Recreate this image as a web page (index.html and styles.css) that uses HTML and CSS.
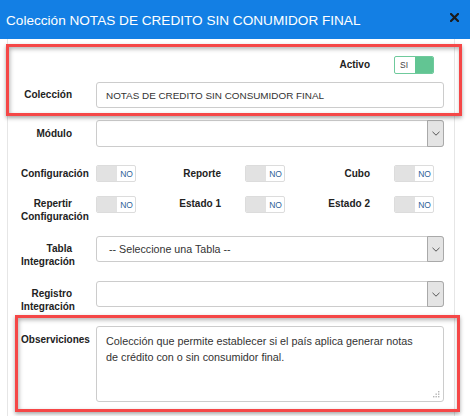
FILE: index.html
```html
<!DOCTYPE html>
<html>
<head>
<meta charset="utf-8">
<link rel="stylesheet" href="styles.css">
</head>
<body>
<div class="header">
  <span class="title">Colección NOTAS DE CREDITO SIN CONUMIDOR FINAL</span>
  <svg class="close" width="9" height="9" viewBox="0 0 9 9"><path d="M1 1L8 8M8 1L1 8" stroke="#1b1b1b" stroke-width="2.2" stroke-linecap="square"/></svg>
</div>
<div class="panel">
  <div class="trow r-activo">
    <div class="grp"></div>
    <div class="grp"></div>
    <div class="grp"><span class="lbl">Activo</span><span class="tg on"><span class="tg-txt">SI</span><span class="tg-knob"></span></span></div>
  </div>
  <div class="frow r-col">
    <span class="lbl">Colección</span>
    <div class="field input">NOTAS DE CREDITO SIN CONSUMIDOR FINAL</div>
  </div>
  <div class="frow r-mod">
    <span class="lbl lbl-mod">Módulo</span>
    <div class="field select"><span class="sel-txt"></span><span class="arrow"><svg width="8" height="5" viewBox="0 0 8 5"><path d="M0.5 0.8L4 4.2L7.5 0.8" fill="none" stroke="#555" stroke-width="1"/></svg></span></div>
  </div>
  <div class="trow r-t1">
    <div class="grp"><span class="lbl">Configuración</span><span class="tg off"><span class="tg-knob"></span><span class="tg-txt">NO</span></span></div>
    <div class="grp"><span class="lbl">Reporte</span><span class="tg off"><span class="tg-knob"></span><span class="tg-txt">NO</span></span></div>
    <div class="grp"><span class="lbl">Cubo</span><span class="tg off"><span class="tg-knob"></span><span class="tg-txt">NO</span></span></div>
  </div>
  <div class="trow r-t2">
    <div class="grp"><span class="lbl">Repertir Configuración</span><span class="tg off"><span class="tg-knob"></span><span class="tg-txt">NO</span></span></div>
    <div class="grp"><span class="lbl">Estado 1</span><span class="tg off"><span class="tg-knob"></span><span class="tg-txt">NO</span></span></div>
    <div class="grp"><span class="lbl">Estado 2</span><span class="tg off"><span class="tg-knob"></span><span class="tg-txt">NO</span></span></div>
  </div>
  <div class="frow r-tab">
    <span class="lbl">Tabla Integración</span>
    <div class="field select"><span class="sel-txt">-- Seleccione una Tabla --</span><span class="arrow"><svg width="8" height="5" viewBox="0 0 8 5"><path d="M0.5 0.8L4 4.2L7.5 0.8" fill="none" stroke="#555" stroke-width="1"/></svg></span></div>
  </div>
  <div class="frow r-reg">
    <span class="lbl">Registro Integración</span>
    <div class="field select"><span class="sel-txt"></span><span class="arrow"><svg width="8" height="5" viewBox="0 0 8 5"><path d="M0.5 0.8L4 4.2L7.5 0.8" fill="none" stroke="#555" stroke-width="1"/></svg></span></div>
  </div>
  <div class="frow r-obs">
    <span class="lbl lbl-obs">Observiciones</span>
    <div class="field textarea">Colección que permite establecer si el país aplica generar notas<br>de crédito con o sin consumidor final.
      <svg class="grip" width="7" height="7" viewBox="0 0 7 7"><g fill="#b5b5b5"><rect x="5" y="0" width="1.4" height="1.4"/><rect x="2.5" y="2.5" width="1.4" height="1.4"/><rect x="5" y="2.5" width="1.4" height="1.4"/><rect x="0" y="5" width="1.4" height="1.4"/><rect x="2.5" y="5" width="1.4" height="1.4"/><rect x="5" y="5" width="1.4" height="1.4"/></g></svg>
    </div>
  </div>
</div>
<div class="mark mark1"></div>
<div class="mark mark2"></div>
</body>
</html>
```

FILE: styles.css
```css
html, body {
  margin: 0;
  padding: 0;
}
body {
  position: relative;
  width: 470px;
  height: 416px;
  overflow: hidden;
  background: #fff;
  font-family: "Liberation Sans", Arial, sans-serif;
  color: #222;
}
.header {
  height: 39px;
  background: #137fe4;
  display: flex;
  align-items: center;
  justify-content: space-between;
  padding: 0 11px 0 6px;
}
.title {
  color: #fff;
  font-size: 13.6px;
  padding-top: 2px;
}
.close {
  display: block;
  margin-top: -4px;
}
.panel {
  margin-left: 7px;
  width: 448px;
  height: 377px;
  border-left: 1px solid #e6e6e6;
  border-right: 1px solid #e6e6e6;
  padding: 17px 0 0 13px;
  box-sizing: border-box;
  display: flex;
  flex-direction: column;
}
.lbl {
  font-size: 10px;
  font-weight: bold;
  line-height: 13px;
  text-align: right;
  color: #222;
  width: 51px;
}
.trow {
  display: grid;
  grid-template-columns: repeat(3, 115px);
  column-gap: 34px;
  height: 17px;
}
.grp {
  display: grid;
  grid-template-columns: 51px 40px;
  column-gap: 24px;
  align-items: start;
  height: 17px;
}
.grp .lbl {
  padding-top: 2px;
}
.tg {
  display: flex;
  width: 40px;
  height: 17px;
  box-sizing: border-box;
  border-radius: 2px;
  overflow: hidden;
}
.tg.off {
  border: 1px solid #dcdcdc;
}
.tg.on {
  border: 1px solid #6fca9c;
  height: 18px;
}
.tg-knob {
  width: 20px;
  height: 100%;
}
.tg.off .tg-knob {
  background: #e2e2e2;
}
.tg.on .tg-knob {
  background: #62c593;
  width: 18px;
}
.tg-txt {
  flex: 1;
  font-size: 8.5px;
  display: flex;
  align-items: center;
  justify-content: center;
}
.tg.off .tg-txt {
  color: #2f5f98;
  padding-left: 1px;
}
.tg.on .tg-txt {
  color: #444;
  padding-right: 2px;
}
.frow {
  display: grid;
  grid-template-columns: 51px 348px;
  column-gap: 24px;
  align-items: start;
  height: 26px;
}
.frow .lbl {
  padding-top: 6px;
}
.frow .lbl-mod, .frow .lbl-obs {
  padding-top: 7px;
}
.field {
  box-sizing: border-box;
  border: 1px solid #cccccc;
  border-radius: 3px;
  color: #333;
  background: #fff;
}
.input {
  height: 26px;
  display: flex;
  align-items: center;
  padding-left: 9px;
  font-size: 9.9px;
}
.select {
  height: 26px;
  display: flex;
  align-items: center;
  justify-content: space-between;
  font-size: 10.7px;
}
.sel-txt {
  padding-left: 12px;
}
.arrow {
  box-sizing: border-box;
  width: 17px;
  height: 26px;
  margin-right: -1px;
  border: 1px solid #a9a9a9;
  border-radius: 0 3px 3px 0;
  background: #e4e4e4;
  display: flex;
  align-items: center;
  justify-content: center;
}
.textarea {
  position: relative;
  height: 76px;
  padding: 6px 9px;
  font-size: 10.8px;
  line-height: 16px;
}
.grip {
  position: absolute;
  right: 3px;
  bottom: 3px;
}
.r-col { margin-top: 9px; }
.r-mod { margin-top: 12px; height: 27px; }
.r-mod .select { height: 27px; }
.r-mod .arrow { height: 27px; }
.r-t1 { margin-top: 18px; }
.r-t2 { margin-top: 14px; }
.r-t2 .grp .lbl { padding-top: 1px; }
.r-tab { margin-top: 23px; }
.r-reg { margin-top: 19px; }
.r-obs { margin-top: 19px; height: 76px; }
.mark {
  position: absolute;
  box-sizing: border-box;
  border: 3px solid #f54747;
  box-shadow: 0 2px 4px rgba(0,0,0,0.35), inset 1px 2px 4px rgba(0,0,0,0.3);
}
.mark1 {
  left: 6px;
  top: 44px;
  width: 456px;
  height: 72px;
}
.mark2 {
  left: 15px;
  top: 315px;
  width: 445px;
  height: 97px;
}
```
